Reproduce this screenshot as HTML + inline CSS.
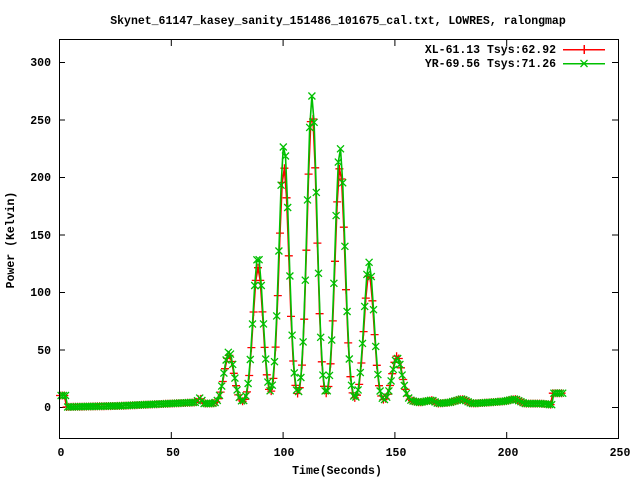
<!DOCTYPE html>
<html><head><meta charset="utf-8"><style>
html,body{margin:0;padding:0;background:#fff;width:640px;height:480px;overflow:hidden}
svg{display:block}
text{font-family:"Liberation Mono",monospace;font-size:11.5px;font-weight:bold;fill:#000}
</style></head><body>
<svg id="s" width="640" height="480" xmlns="http://www.w3.org/2000/svg">
<rect width="640" height="480" fill="#fff"/>
<text x="338" y="24" text-anchor="middle">Skynet_61147_kasey_sanity_151486_101675_cal.txt, LOWRES, ralongmap</text>
<g id="ticks" stroke="#000" stroke-width="1"></g>
<g id="data"></g>
<rect x="59.5" y="39.5" width="559" height="399" fill="none" stroke="#000" stroke-width="1"/>
<g text-anchor="end">
<text x="51" y="66">300</text><text x="51" y="124">250</text><text x="51" y="181">200</text>
<text x="51" y="239">150</text><text x="51" y="296">100</text><text x="51" y="354">50</text>
<text x="51" y="411">0</text>
</g>
<g text-anchor="middle">
<text x="61" y="456">0</text><text x="173" y="456">50</text><text x="284" y="456">100</text>
<text x="396" y="456">150</text><text x="508" y="456">200</text><text x="620" y="456">250</text>
</g>
<text x="337" y="474" text-anchor="middle">Time(Seconds)</text>
<text transform="translate(14,240) rotate(-90)" text-anchor="middle">Power (Kelvin)</text>
<text x="556" y="53" text-anchor="end">XL-61.13 Tsys:62.92</text>
<text x="556" y="67" text-anchor="end">YR-69.56 Tsys:71.26</text>
<g shape-rendering="crispEdges" stroke-width="1.5" fill="none">
<line x1="563" y1="49.5" x2="605" y2="49.5" stroke="#f00"/>
<path d="M584 45v9M579.5 49.5h9" stroke="#f00"/>
<line x1="563" y1="63.5" x2="605" y2="63.5" stroke="#00c000"/>
</g>
<path d="M580.5 60l7 7M587.5 60l-7 7" stroke="#00c000" stroke-width="1.3"/>
</svg>
<script>
var ns="http://www.w3.org/2000/svg";
var tk=document.getElementById('ticks'),d="";
for(var i=0;i<=5;i++){var x=59.5+i*111.8;d+="M"+x+" 438v-6M"+x+" 40v6";}
for(var j=0;j<=6;j++){var y=407.5-j*57.5;d+="M59 "+y+"h6M618 "+y+"h-6";}
var p=document.createElementNS(ns,'path');p.setAttribute('d',d);tk.appendChild(p);
var pk=[229,258,284,312,340,369,397];
var Ag=[45,128,225,267,222,122,38],Ar=[42,118,205,252,205,112,40];
function base(x){
 if(x<66)return 10; if(x>552)return 12;
 var pts=[[66,0],[120,1],[170,3],[196,4],[200,8],[204,3],[230,3],[395,4],[405,6],[420,4],[432,6],[438,3],[450,4],[462,7],[472,3],[490,4],[505,5],[515,7],[525,3],[540,3],[552,2]];
 for(var k=0;k<pts.length-1;k++){if(x<=pts[k+1][0]){var a=pts[k],b=pts[k+1];return a[1]+(b[1]-a[1])*(x-a[0])/(b[0]-a[0]);}}
 return 2;}
function val(x,A){var v=base(x);for(var k=0;k<pk.length;k++){v+=A[k]*Math.exp(-Math.pow((x-pk[k])/7,2));}return v;}
var g=document.getElementById('data');
function series(A,off,col,mk){
 var pts=[],md="";
 for(var x=60+off;x<=563;x+=2.2){var y=407-val(x,A)*1.15;pts.push(x.toFixed(1)+","+y.toFixed(1));
  if(mk=='+')md+="M"+x.toFixed(1)+" "+(y-4).toFixed(1)+"v8M"+(x-4).toFixed(1)+" "+y.toFixed(1)+"h8";
  else md+="M"+(x-3.5).toFixed(1)+" "+(y-3.5).toFixed(1)+"l7 7M"+(x+3.5).toFixed(1)+" "+(y-3.5).toFixed(1)+"l-7 7";}
 var pl=document.createElementNS(ns,'polyline');pl.setAttribute('points',pts.join(' '));pl.setAttribute('fill','none');pl.setAttribute('stroke',col);pl.setAttribute('stroke-width','1.6');g.appendChild(pl);
 var m=document.createElementNS(ns,'path');m.setAttribute('d',md);m.setAttribute('stroke',col);m.setAttribute('stroke-width','1.3');m.setAttribute('fill','none');g.appendChild(m);}
series(Ar,0,'#f00','+');
series(Ag,1.1,'#00c000','x');
</script>
</body></html>
